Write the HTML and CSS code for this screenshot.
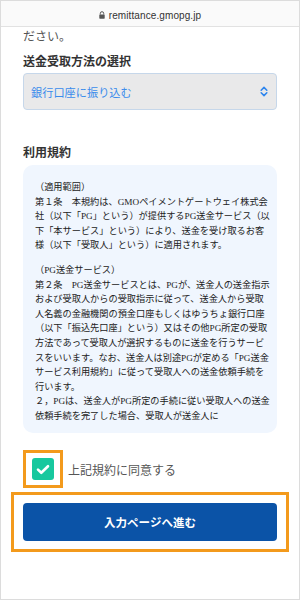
FILE: index.html
```html
<!DOCTYPE html>
<html lang="ja">
<head>
<meta charset="utf-8">
<title>remittance.gmopg.jp</title>
<link rel="stylesheet" href="styles.css">
</head>
<body>
<div class="frame">
  <div class="urlbar">
    <svg class="lock" width="6" height="8" viewBox="0 0 6 8"><path d="M1.3 3.5V2.4a1.7 1.7 0 0 1 3.4 0v1.1" fill="none" stroke="#555" stroke-width="1"/><rect x="0.3" y="3.5" width="5.4" height="4.2" rx="0.6" fill="#555"/></svg>
    <span class="url">remittance.gmopg.jp</span>
  </div>
  <div class="content">
    <p class="lead">ださい。</p>
    <h2 class="label">送金受取方法の選択</h2>
    <div class="select">
      <span class="select-text">銀行口座に振り込む</span>
      <svg class="chev" width="8" height="11" viewBox="0 0 8 11"><path d="M1.2 4.2 4 1.4l2.8 2.8M1.2 6.8 4 9.6l2.8-2.8" fill="none" stroke="#2f86ee" stroke-width="1.6" stroke-linecap="round" stroke-linejoin="round"/></svg>
    </div>
    <h2 class="label label-terms">利用規約</h2>
    <div class="terms">
      <div class="para">
        <span class="ln">（適用範囲）</span>
        <span class="ln">第１条　本規約は、GMOペイメントゲートウェイ株式会</span>
        <span class="ln">社（以下「PG」という）が提供するPG送金サービス（以</span>
        <span class="ln">下「本サービス」という）により、送金を受け取るお客</span>
        <span class="ln">様（以下「受取人」という）に適用されます。</span>
      </div>
      <div class="para">
        <span class="ln">（PG送金サービス）</span>
        <span class="ln">第２条　PG送金サービスとは、PGが、送金人の送金指示</span>
        <span class="ln">および受取人からの受取指示に従って、送金人から受取</span>
        <span class="ln">人名義の金融機関の預金口座もしくはゆうちょ銀行口座</span>
        <span class="ln">（以下「振込先口座」という）又はその他PG所定の受取</span>
        <span class="ln">方法であって受取人が選択するものに送金を行うサービ</span>
        <span class="ln">スをいいます。なお、送金人は別途PGが定める「PG送金</span>
        <span class="ln">サービス利用規約」に従って受取人への送金依頼手続を</span>
        <span class="ln">行います。</span>
        <span class="ln">２，PGは、送金人がPG所定の手続に従い受取人への送金</span>
        <span class="ln">依頼手続を完了した場合、受取人が送金人に</span>
      </div>
    </div>
    <div class="agree">
      <div class="hl-check">
        <span class="checkbox"><svg width="14" height="11" viewBox="0 0 14 11"><path d="M2 5.6 5.3 8.8 12 2.2" fill="none" stroke="#fff" stroke-width="2.6" stroke-linecap="round" stroke-linejoin="round"/></svg></span>
      </div>
      <span class="agree-text">上記規約に同意する</span>
    </div>
    <div class="hl-button">
      <button class="btn" type="button">入力ページへ進む</button>
    </div>
  </div>
</div>
</body>
</html>
```

FILE: styles.css
```css
html, body {
  margin: 0;
  padding: 0;
  background: #fff;
}
body {
  font-family: "Noto Sans CJK JP", "Liberation Sans", sans-serif;
  color: #333;
}
.frame {
  width: 300px;
  height: 600px;
  box-sizing: border-box;
  border: 1px solid #dcdcdc;
  overflow: hidden;
  background: #fff;
}
.urlbar {
  height: 26px;
  box-sizing: border-box;
  border-bottom: 1px solid #e2e2e2;
  background: #fafafa;
  display: flex;
  align-items: center;
  justify-content: center;
  gap: 4px;
  padding-top: 3px;
}
.url {
  font-family: "Liberation Sans", "Noto Sans", sans-serif;
  font-size: 10px;
  color: #333;
  letter-spacing: 0.1px;
}
.lock {
  display: block;
}
.content {
  padding: 0 22px;
}
.lead {
  margin: 0;
  font-size: 12px;
  line-height: 18px;
  color: #555;
}
.label {
  margin: 7px 0 0;
  font-size: 12px;
  line-height: 18px;
  font-weight: 700;
  color: #333;
}
.label-terms {
  margin-top: 33px;
}
.select {
  margin-top: 3px;
  height: 37px;
  box-sizing: border-box;
  border: 1px solid #c6d7ea;
  border-radius: 4px;
  background: #e9e9ea;
  display: flex;
  align-items: center;
  justify-content: space-between;
  padding: 0 8px 0 7px;
}
.select-text {
  font-size: 11.2px;
  color: #3a8cec;
}
.chev {
  display: block;
}
.terms {
  margin-top: 4px;
  height: 268px;
  box-sizing: border-box;
  background: #f0f6fe;
  border-radius: 10px;
  padding: 15px 0 0 12px;
  overflow: hidden;
  font-family: "Liberation Serif", "Noto Sans CJK JP", serif;
  font-size: 9.2px;
  line-height: 14.6px;
  color: #222;
}
.para + .para {
  margin-top: 10px;
}
.ln {
  display: block;
  white-space: nowrap;
}
.agree {
  margin-top: 17px;
  display: flex;
  align-items: center;
  gap: 5px;
}
.hl-check {
  width: 40px;
  height: 38px;
  box-sizing: border-box;
  border: 3px solid #f39a1c;
  display: flex;
  align-items: center;
  justify-content: center;
}
.checkbox {
  width: 22px;
  height: 22px;
  border-radius: 3px;
  background: #17c89e;
  display: flex;
  align-items: center;
  justify-content: center;
}
.checkbox svg {
  display: block;
}
.agree-text {
  font-size: 12px;
  color: #555;
}
.hl-button {
  margin: 4px -12px 0;
  border: 3px solid #f39a1c;
  padding: 8px 9px;
}
.btn {
  display: block;
  width: 100%;
  height: 38px;
  border: 0;
  border-radius: 4px;
  background: #0b53a7;
  color: #fff;
  font-family: "Noto Sans CJK JP", "Liberation Sans", sans-serif;
  font-size: 11.5px;
  font-weight: 700;
  cursor: pointer;
}
```
